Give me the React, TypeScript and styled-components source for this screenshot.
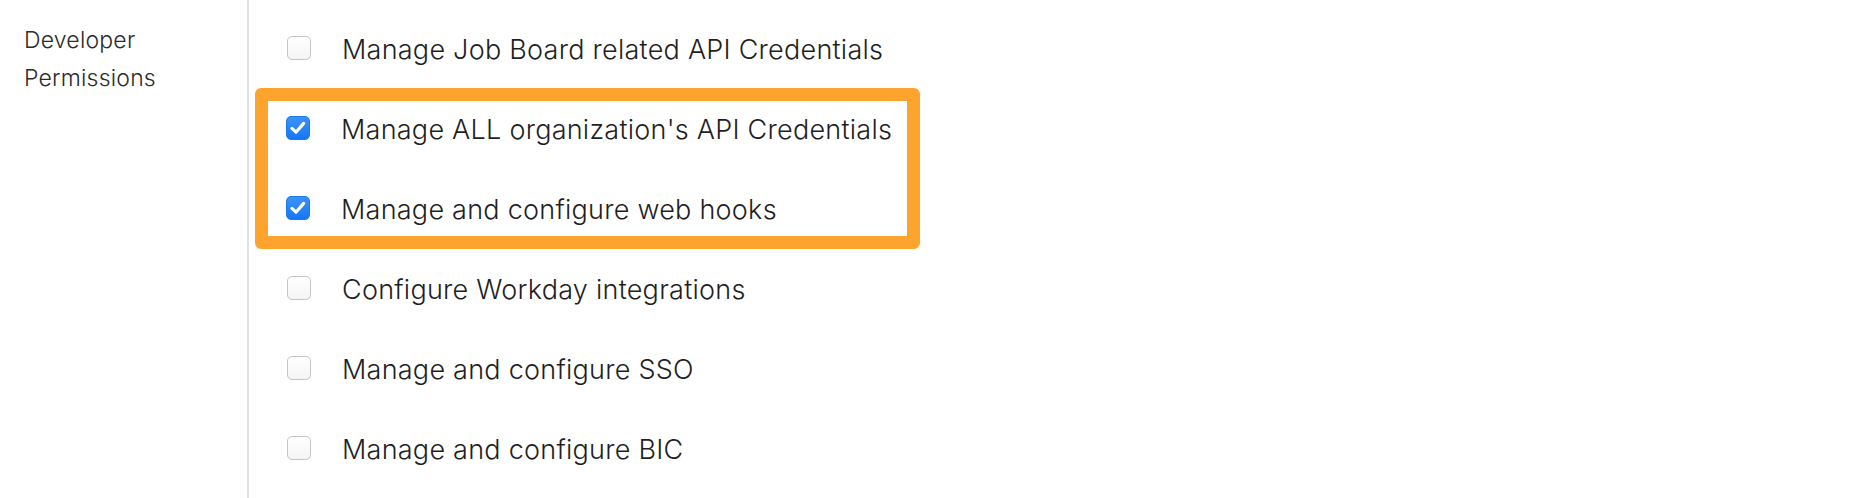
import styled, { createGlobalStyle } from "styled-components";

const GlobalStyle = createGlobalStyle`
  body {
    margin: 0;
    background: #ffffff;
    font-family: Inter, "Liberation Sans", sans-serif;
    color: #222222;
  }
`;

type Permission = {
  label: string;
  checked: boolean;
};

const before: Permission[] = [
  { label: "Manage Job Board related API Credentials", checked: false },
];

const highlighted: Permission[] = [
  { label: "Manage ALL organization's API Credentials", checked: true },
  { label: "Manage and configure web hooks", checked: true },
];

const after: Permission[] = [
  { label: "Configure Workday integrations", checked: false },
  { label: "Manage and configure SSO", checked: false },
  { label: "Manage and configure BIC", checked: false },
];

function CheckMark() {
  return (
    <svg width="22" height="22" viewBox="0 0 22 22">
      <path
        d="M5 11.4 L9 15.2 L16.6 6.4"
        fill="none"
        stroke="#ffffff"
        strokeWidth="3.2"
        strokeLinecap="round"
        strokeLinejoin="round"
      />
    </svg>
  );
}

function PermissionRow({ label, checked }: Permission) {
  return (
    <Row>
      <Box $checked={checked}>{checked && <CheckMark />}</Box>
      <Label>{label}</Label>
    </Row>
  );
}

function App() {
  return (
    <>
      <GlobalStyle />
      <Section>
        <SectionTitle>
          Developer
          <br />
          Permissions
        </SectionTitle>
        <List>
          {before.map((p) => (
            <PermissionRow key={p.label} {...p} />
          ))}
          <Highlight>
            {highlighted.map((p) => (
              <PermissionRow key={p.label} {...p} />
            ))}
          </Highlight>
          {after.map((p) => (
            <PermissionRow key={p.label} {...p} />
          ))}
        </List>
      </Section>
    </>
  );
}

export default App;

const Section = styled.div`
  display: grid;
  grid-template-columns: 249px 1fr;
  width: 1864px;
  height: 498px;
  overflow: hidden;
`;

const SectionTitle = styled.div`
  border-right: 2px solid #e1e1e1;
  padding: 21px 0 0 24px;
  font-size: 23px;
  font-weight: 300;
  letter-spacing: 0.2px;
  line-height: 38px;
  color: #2b2b2b;
`;

const List = styled.div`
  display: flex;
  flex-direction: column;
  padding-top: 8px;
`;

const Highlight = styled.div`
  position: relative;
  margin-left: 6px;
  width: 665px;

  & > div {
    padding-left: 31px;
  }

  &::after {
    content: "";
    position: absolute;
    inset: 0 0 -1px 0;
    border: 13px solid #fda42e;
    border-radius: 6px;
    pointer-events: none;
  }
`;

const Row = styled.div`
  display: flex;
  align-items: center;
  height: 80px;
  padding-left: 38px;
  gap: 31px;
`;

const Box = styled.span<{ $checked: boolean }>`
  box-sizing: border-box;
  flex: none;
  width: 24px;
  height: 24px;
  border-radius: 5px;
  display: flex;
  align-items: center;
  justify-content: center;
  border: 1px solid ${(p) => (p.$checked ? "#1a78f2" : "#c4c4c4")};
  background: ${(p) =>
    p.$checked
      ? "linear-gradient(#3b92f8, #1677f3)"
      : "linear-gradient(#ffffff, #f4f4f4)"};
`;

const Label = styled.span`
  padding-top: 4px;
  font-size: 27px;
  font-weight: 300;
  letter-spacing: 0.25px;
  line-height: 32px;
  color: #1f1f1f;
  white-space: nowrap;
`;
